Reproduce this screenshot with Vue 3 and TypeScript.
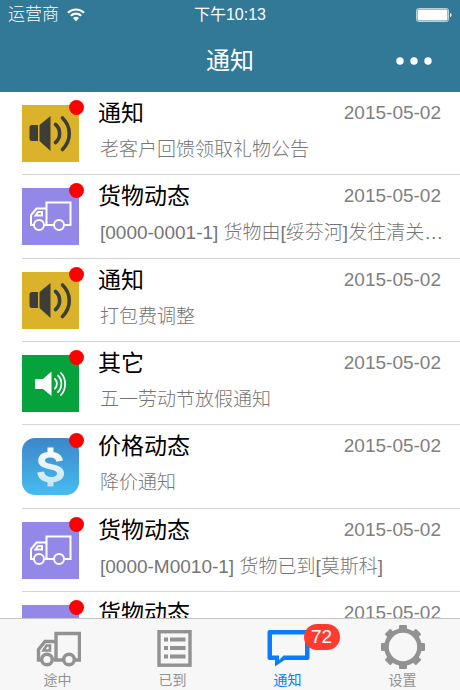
<script setup lang="ts">
type Kind = 'speaker' | 'truck' | 'sound' | 'price'
interface Notice {
  id: number
  kind: Kind
  title: string
  text: string
  date: string
}
type TabIcon = 'truck' | 'list' | 'chat' | 'gear'
interface Tab {
  icon: TabIcon
  label: string
  badge?: number
}

const notices: Notice[] = [
  { id: 1, kind: 'speaker', title: '通知', text: '老客户回馈领取礼物公告', date: '2015-05-02' },
  { id: 2, kind: 'truck', title: '货物动态', text: '[0000-0001-1] 货物由[绥芬河]发往清关…', date: '2015-05-02' },
  { id: 3, kind: 'speaker', title: '通知', text: '打包费调整', date: '2015-05-02' },
  { id: 4, kind: 'sound', title: '其它', text: '五一劳动节放假通知', date: '2015-05-02' },
  { id: 5, kind: 'price', title: '价格动态', text: '降价通知', date: '2015-05-02' },
  { id: 6, kind: 'truck', title: '货物动态', text: '[0000-M0010-1] 货物已到[莫斯科]', date: '2015-05-02' },
  { id: 7, kind: 'truck', title: '货物动态', text: '', date: '2015-05-02' },
]

const tabs: Tab[] = [
  { icon: 'truck', label: '途中' },
  { icon: 'list', label: '已到' },
  { icon: 'chat', label: '通知', badge: 72 },
  { icon: 'gear', label: '设置' },
]
const current: TabIcon = 'chat'
const teeth = [0, 45, 90, 135, 180, 225, 270, 315]
</script>

<template>
  <div class="app">
    <header class="header">
      <div class="status">
        <div class="carrier">
          <span>运营商</span>
          <svg class="wifi" viewBox="0 0 18 14" aria-hidden="true">
            <path d="M1 4.8C5.4.4 12.6.4 17 4.8" />
            <path d="M3.9 7.8c2.8-2.8 7.400-2.800 10.200 0" />
            <path class="solid" d="M5.900 9.900c1.700-1.700 4.500-1.700 6.200 0L9 13.200z" />
          </svg>
        </div>
        <span class="time">下午10:13</span>
        <svg class="battery" viewBox="0 0 36 14" aria-hidden="true">
          <rect class="shell" x=".5" y=".5" width="32" height="13" rx="2" />
          <rect x="1.500" y="1.500" width="30" height="11" rx="1" />
          <path d="M34 5c2 .5 2 3.500 0 4z" />
        </svg>
      </div>
      <div class="nav">
        <h1>通知</h1>
        <button class="more" type="button" aria-label="更多">
          <svg viewBox="0 0 36 8" aria-hidden="true">
            <circle cx="4" cy="4" r="3.700" /><circle cx="18" cy="4" r="3.700" /><circle cx="32" cy="4" r="3.700" />
          </svg>
        </button>
      </div>
    </header>

    <main class="list">
      <article v-for="n in notices" :key="n.id" class="row">
        <div class="thumb" :class="n.kind">
          <svg v-if="n.kind === 'speaker'" viewBox="0 0 57 57" aria-hidden="true">
            <path class="dark" d="M10 20h6v16h-6q-2.500 0-2.500-2.500v-11Q7.500 20 10 20z M17.500 20 28.500 11v35L17.500 36z" />
            <path class="wave" d="M33.500 19.500c5.500 4.500 5.500 13.500 0 18M40.500 13c9 8.500 9 22.500 0 31.500" />
          </svg>
          <svg v-else-if="n.kind === 'truck'" viewBox="0 0 57 57" aria-hidden="true">
            <g class="line">
              <path d="M24.500 37V14.500h24V37H43" />
              <path d="M31.500 37h-9M12 37H9V27l5.500-6.500h10" />
              <path d="M13.500 27.500 16 24h4v3.500z" />
              <circle cx="17" cy="37" r="5" /><circle cx="37" cy="37" r="5" />
            </g>
          </svg>
          <svg v-else-if="n.kind === 'sound'" viewBox="0 0 57 57" aria-hidden="true">
            <path class="white" d="M14 24h7l8.500-7.500V41L21 34h-7q-1 0-1-1v-8q0-1 1-1z" />
            <path class="ripple" d="M33 24c2.500 2.500 2.500 7 0 9.500M36 20.500c4.500 4.500 4.500 12 0 16.500M39 18c5.500 6 5.500 16 0 22" />
          </svg>
          <svg v-else viewBox="0 0 57 57" aria-hidden="true">
            <defs>
              <linearGradient id="coin" x1="0" y1="0" x2="0" y2="1">
                <stop offset="0" stop-color="#fff" /><stop offset="1" stop-color="#c5e4f6" />
              </linearGradient>
            </defs>
            <path fill="url(#coin)" d="M25.500 9.500h6V14c5 .8 8.500 3.500 9.500 8.500l-6.500 1.200c-.8-3-3-4.200-6.200-4.200-3.300 0-5.300 1.200-5.300 3.100 0 2.200 2.500 2.700 7 3.700 7 1.500 12 3.500 12 9.200 0 5-4 8-10.500 8.800v4.200h-6v-4.200C19.500 43.500 16 40 15.300 34.600l6.700-1c.8 3.700 3 5.300 7 5.300 3.700 0 6-1.300 6-3.500 0-2.400-2.200-3-7.500-4.200-6.500-1.400-11.300-3.200-11.300-8.700 0-4.500 3.500-7.700 9.300-8.500z" />
          </svg>
          <i class="dot"></i>
        </div>
        <div class="body">
          <div class="top">
            <h2>{{ n.title }}</h2>
            <time :datetime="n.date">{{ n.date }}</time>
          </div>
          <p>{{ n.text }}</p>
        </div>
      </article>
    </main>

    <nav class="tabs">
      <a v-for="t in tabs" :key="t.icon" href="#" class="tab" :class="{ active: t.icon === current }">
        <span class="glyph">
          <svg v-if="t.icon === 'truck'" viewBox="0 0 46 46" aria-hidden="true">
            <g class="stroke">
              <path d="M21 34V8.500h23.500V35H40" />
              <path d="M28 35h-9M7 35H3.500V24.500L10 16.500h11" />
              <path d="M8.500 25.500 11.500 20.500H15v5z" stroke-width="2.600" />
              <circle cx="12" cy="34.500" r="5.300" /><circle cx="34" cy="34.500" r="5.300" />
            </g>
          </svg>
          <svg v-else-if="t.icon === 'list'" viewBox="0 0 46 46" aria-hidden="true">
            <rect class="stroke" x="9" y="6.700" width="31" height="33.500" />
            <path class="fill" d="M14 12.500h4v4h-4zM20 12.500h15.500v4H20zM14 21h4v4h-4zM20 21h15.500v4H20zM14 29.500h4v4h-4zM20 29.500h15.500v4H20z" />
          </svg>
          <svg v-else-if="t.icon === 'chat'" viewBox="0 0 46 46" aria-hidden="true">
            <path class="fill" fill-rule="evenodd" d="M4.500 5h38q2 0 2 2v26q0 2-2 2H19.500L10 41.500V35H4.500q-2 0-2-2V7q0-2 2-2zM7 9.500V30.500h7v4.500l4.500-4.500h21.500v-21z" />
          </svg>
          <svg v-else viewBox="0 0 46 46" aria-hidden="true">
            <circle class="ring" cx="23" cy="22" r="16.500" />
            <path v-for="a in teeth" :key="a" class="fill" :transform="`rotate(${a} 23 22)`" d="M19 5V1q0-1 1-1h6q1 0 1 1v4z" />
          </svg>
          <b v-if="t.badge" class="badge">{{ t.badge }}</b>
        </span>
        <span class="label">{{ t.label }}</span>
      </a>
    </nav>
  </div>
</template>

<style>
body {
  margin: 0;
  background: #fff;
}
</style>

<style scoped>
.app {
  display: flex;
  flex-direction: column;
  height: 100vh;
  overflow: hidden;
  font-family: "Liberation Sans", "Noto Sans CJK SC", sans-serif;
  color: #000;
}
svg {
  display: block;
}
.header {
  flex: none;
  background: #327897;
  color: #fff;
}
.status {
  display: grid;
  grid-template-columns: 1fr auto 1fr;
  align-items: center;
  height: 30px;
  padding: 0 8px;
  font-size: 17px;
  line-height: 30px;
}
.carrier {
  display: flex;
  align-items: center;
  gap: 8px;
  font-weight: 300;
}
.wifi {
  width: 18px;
  height: 14px;
  fill: none;
  stroke: #fff;
  stroke-width: 2.2;
}
.wifi .solid {
  fill: #fff;
  stroke: none;
}
.time {
  font-size: 16px;
}
.battery {
  justify-self: end;
  width: 36px;
  height: 14px;
  fill: #fff;
}
.battery .shell {
  fill: none;
  stroke: #b9d3de;
}
.nav {
  display: grid;
  grid-template-columns: 1fr auto 1fr;
  align-items: center;
  height: 62px;
  padding: 0 28px;
}
h1 {
  grid-column: 2;
  margin: 0;
  font-size: 24px;
  font-weight: 400;
  line-height: 62px;
}
.more {
  justify-self: end;
  padding: 0;
  border: 0;
  background: none;
}
.more svg {
  width: 36px;
  height: 8px;
  fill: #fff;
}
.list {
  flex: 1;
  min-height: 0;
  overflow: hidden;
}
.row {
  box-sizing: border-box;
  display: flex;
  gap: 19px;
  height: 83px;
  margin-left: 22px;
  border-bottom: 1px solid #d4d4d4;
}
.row:nth-child(3n + 2) {
  height: 84px;
}
.thumb {
  position: relative;
  flex: none;
  width: 57px;
  height: 57px;
  margin-top: 13px;
}
.thumb svg {
  width: 57px;
  height: 57px;
}
.speaker {
  background: #dab32b;
}
.truck {
  background: #9388e8;
}
.sound {
  background: #06a33c;
}
.price {
  border-radius: 13px;
  background: linear-gradient(#3e86c9, #45bdf0);
}
.dark {
  fill: #3f3d38;
}
.wave {
  fill: none;
  stroke: #3f3d38;
  stroke-width: 3.6;
  stroke-linecap: round;
}
.line {
  fill: none;
  stroke: #fff;
  stroke-width: 2;
}
.line circle {
  fill: #9388e8;
}
.white {
  fill: #fff;
}
.ripple {
  fill: none;
  stroke: #fff;
  stroke-width: 1.8;
  stroke-linecap: round;
}
.dot {
  position: absolute;
  top: -5px;
  right: -5px;
  width: 15px;
  height: 15px;
  border-radius: 50%;
  background: #f00;
}
.body {
  flex: 1;
  min-width: 0;
  padding: 4px 15px 0 0;
}
.top {
  display: flex;
  justify-content: space-between;
  padding-right: 4px;
}
h2 {
  margin: 0;
  font-size: 23px;
  font-weight: 400;
  line-height: 34px;
}
time {
  color: #808080;
  font-size: 19px;
  line-height: 34px;
}
p {
  margin: 6px 0 0;
  padding-left: 2px;
  overflow: hidden;
  color: #757575;
  font-size: 19px;
  font-weight: 300;
  line-height: 28px;
  white-space: nowrap;
}
.tabs {
  box-sizing: border-box;
  flex: none;
  display: grid;
  grid-template-columns: repeat(4, 1fr);
  height: 72px;
  border-top: 1px solid #c4c4c4;
  background: #f7f7f7;
}
.tab {
  display: flex;
  flex-direction: column;
  align-items: center;
  padding-top: 6px;
  color: #929292;
  text-decoration: none;
}
.tab.active {
  color: #0a7cff;
}
.glyph {
  position: relative;
}
.glyph svg {
  width: 46px;
  height: 46px;
}
.stroke {
  fill: none;
  stroke: currentColor;
  stroke-width: 3.4;
}
.fill {
  fill: currentColor;
}
.ring {
  fill: none;
  stroke: currentColor;
  stroke-width: 4.6;
}
.badge {
  position: absolute;
  top: -1px;
  left: 39px;
  width: 36px;
  border-radius: 13px;
  background: #ff3b30;
  color: #fff;
  font-size: 19px;
  font-weight: 400;
  line-height: 26px;
  text-align: center;
}
.label {
  font-size: 14px;
  line-height: 18px;
}
</style>
